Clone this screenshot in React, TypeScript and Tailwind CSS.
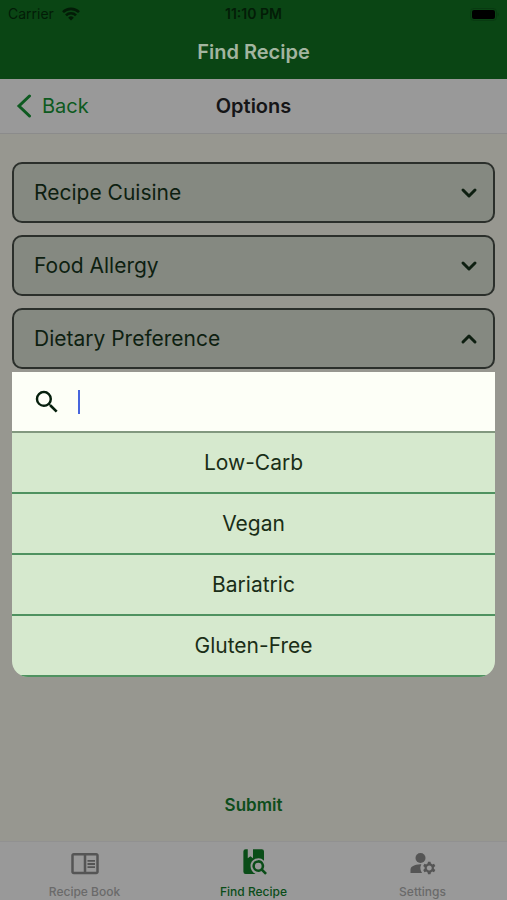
import React, { useState } from 'react';
import { ChevronDown, ChevronUp } from 'lucide-react';
import { MdManageAccounts, MdOutlineChromeReaderMode, MdSearch } from 'react-icons/md';

const filters = ['Recipe Cuisine', 'Food Allergy', 'Dietary Preference'];
const dietOptions = ['Low-Carb', 'Vegan', 'Bariatric', 'Gluten-Free'];

const BookSearchIcon = () => (
  <svg width="30" height="30" viewBox="0 0 24 24" fill="currentColor" aria-hidden="true">
    <path d="M5.300 1H7v7.200l2.100-1.600 2.100 1.600V1h7A1.800 1.800 0 0 1 20 2.800v7.300A6.300 6.300 0 0 0 9.200 14.400c0 2.700 1.500 5 3.800 6.200v.2H5.300a1.800 1.800 0 0 1-1.800-1.800V2.800A1.800 1.800 0 0 1 5.300 1z" />
    <path d="M15.400 9.700a4.700 4.700 0 0 1 4 7.200l3 3-1.500 1.500-3-3a4.700 4.700 0 1 1-2.500-8.700zm0 2a2.700 2.700 0 1 0 0 5.400 2.700 2.700 0 0 0 0-5.400z" />
  </svg>
);

const StatusBar = () => (
  <div className="grid h-7 grid-cols-3 items-center px-2 text-sm text-[#031c07]">
    <div className="flex items-center gap-2">
      <span>Carrier</span>
      <svg width="18" height="14" viewBox="0 0 18 14" fill="none" stroke="currentColor" strokeWidth="2.600" aria-hidden="true">
        <path d="M1 5.200a11.300 11.300 0 0 1 16 0" />
        <path d="M4 8.400a7 7 0 0 1 10 0" />
        <path d="M9 13.500 6.200 10.700a4 4 0 0 1 5.600 0z" fill="currentColor" stroke="none" />
      </svg>
    </div>
    <span className="text-center font-semibold">11:10 PM</span>
    <svg className="justify-self-end" width="29" height="13" viewBox="0 0 29 13" aria-hidden="true">
      <rect x="0.500" y="0.500" width="26" height="12" rx="3.500" fill="none" stroke="#083a11" />
      <rect x="2" y="2" width="23" height="9" rx="2" fill="#000" />
      <path d="M27.500 4.500a2.200 2.200 0 0 1 0 4z" fill="#083a11" />
    </svg>
  </div>
);

const App = () => {
  const [openFilter, setOpenFilter] = useState('Dietary Preference');
  const [query, setQuery] = useState('');

  const tabs = [
    { name: 'Recipe Book', href: '#book', icon: <MdOutlineChromeReaderMode size={30} /> },
    { name: 'Find Recipe', href: '#find', icon: <BookSearchIcon /> },
    { name: 'Settings', href: '#settings', icon: <MdManageAccounts size={30} /> },
  ];
  const activeTab = 'Find Recipe';

  const visibleOptions = dietOptions.filter((option) =>
    option.toLowerCase().includes(query.toLowerCase())
  );

  return (
    <div className="flex min-h-screen flex-col bg-[#979790] font-['Inter',sans-serif]">
      <header className="bg-[#0a4514] pb-[11px]">
        <StatusBar />
        <h1 className="pt-2 text-center text-xl leading-8 font-semibold text-[#a3b5a0]">Find Recipe</h1>
      </header>

      <nav className="grid grid-cols-3 items-center border-b border-[#8b8b8b] bg-[#999999] px-4 py-[13px]">
        <a href="#back" className="flex items-center gap-2.5 text-xl text-[#0d5a20]">
          <svg width="16" height="24" viewBox="0 0 16 24" fill="none" stroke="currentColor" strokeWidth="3" strokeLinecap="round" aria-hidden="true">
            <path d="M13.500 2 3 12l10.500 10" />
          </svg>
          Back
        </a>
        <h2 className="text-center text-xl font-semibold text-[#151517]">Options</h2>
      </nav>

      <main className="flex flex-1 flex-col px-3 pt-7">
        <div className="flex flex-col gap-3">
          {filters.map((filter) => {
            const isOpen = filter === openFilter;
            return (
              <div key={filter} className="relative">
                <button
                  type="button"
                  aria-expanded={isOpen}
                  onClick={() => setOpenFilter(isOpen ? '' : filter)}
                  className="flex h-[61px] w-full items-center justify-between rounded-[10px] border-2 border-[#2b2f2b] bg-[#858981] pr-3 pl-5 text-[21px] text-[#0e1f11]"
                >
                  {filter}
                  {isOpen ? <ChevronUp size={24} strokeWidth={3} /> : <ChevronDown size={24} strokeWidth={3} />}
                </button>

                {isOpen && (
                  <div className="absolute inset-x-0 top-full z-10 mt-[3px] overflow-hidden rounded-b-2xl bg-[#d6e9ce]">
                    <label className="flex h-[61px] items-center gap-4 border-b-2 border-[#82987f] bg-[#fdfff7] pr-4 pl-5 text-[#06200d]">
                      <MdSearch size={30} className="shrink-0" />
                      <input
                        autoFocus
                        aria-label="Search"
                        value={query}
                        onChange={(e) => setQuery(e.target.value)}
                        className="h-6 w-full border-l-2 border-[#4765dd] bg-transparent text-[21px] caret-transparent outline-none"
                      />
                    </label>
                    <ul>
                      {visibleOptions.map((option) => (
                        <li key={option}>
                          <button
                            type="button"
                            className="h-[61px] w-full border-b-2 border-[#4f9260] text-center text-[21px] text-[#1a2e17]"
                          >
                            {option}
                          </button>
                        </li>
                      ))}
                    </ul>
                  </div>
                )}
              </div>
            );
          })}
        </div>

        <button type="button" className="mt-auto mb-5 self-center py-1 text-[17px] leading-6 font-semibold text-[#0d4d1b]">
          Submit
        </button>
      </main>

      <footer className="grid grid-cols-3 border-t border-[#919191] bg-[#999999] pt-1.5">
        {tabs.map((tab) => (
          <a
            key={tab.name}
            href={tab.href}
            className={`flex flex-col items-center gap-1.5 text-xs font-medium ${
              tab.name === activeTab ? 'text-[#0a4d18]' : 'text-[#6a6a6a]'
            }`}
          >
            <span className={tab.name === activeTab ? 'text-[#0a4d18]' : 'text-[#555555]'}>{tab.icon}</span>
            {tab.name}
          </a>
        ))}
      </footer>
    </div>
  );
};

export default App;
